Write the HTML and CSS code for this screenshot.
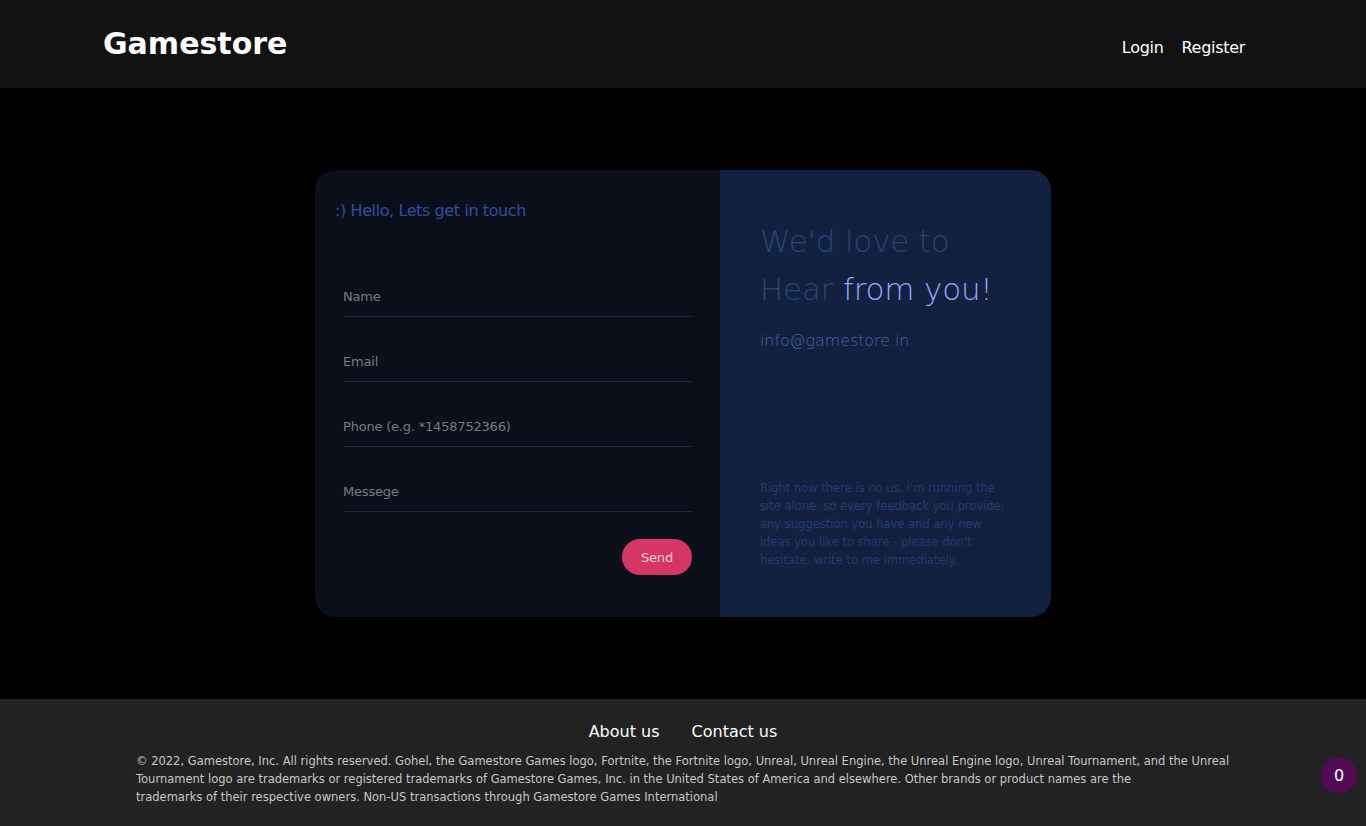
FILE: index.html
```html
<!DOCTYPE html>
<html lang="en">
<head>
<meta charset="utf-8">
<title>Gamestore - Contact</title>
<link rel="stylesheet" href="styles.css">
</head>
<body>
<header class="topbar">
  <a class="logo" href="#">Gamestore</a>
  <nav class="nav">
    <a href="#">Login</a>
    <a href="#">Register</a>
  </nav>
</header>

<main class="main">
  <section class="card">
    <div class="card-form">
      <h2 class="hello">:) Hello, Lets get in touch</h2>
      <form class="form">
        <input class="field" type="text" placeholder="Name">
        <input class="field" type="email" placeholder="Email">
        <input class="field" type="text" placeholder="Phone (e.g. *1458752366)">
        <input class="field" type="text" placeholder="Messege">
        <div class="actions"><button class="send" type="button">Send</button></div>
      </form>
    </div>
    <div class="card-info">
      <h1 class="love">We'd love to<br>Hear <span class="hl">from you!</span></h1>
      <p class="mail">info@gamestore.in</p>
      <p class="note">Right now there is no us, i'm running the site alone. so every feedback you provide, any suggestion you have and any new ideas you like to share - please don't hesitate, write to me immediately.</p>
    </div>
  </section>
</main>

<footer class="footer">
  <div class="flinks">
    <a href="#">About us</a>
    <a href="#">Contact us</a>
  </div>
  <p class="legal">© 2022, Gamestore, Inc. All rights reserved. Gohel, the Gamestore Games logo, Fortnite, the Fortnite logo, Unreal, Unreal Engine, the Unreal Engine logo, Unreal Tournament, and the Unreal Tournament logo are trademarks or registered trademarks of Gamestore Games, Inc. in the United States of America and elsewhere. Other brands or product names are the<br>trademarks of their respective owners. Non-US transactions through Gamestore Games International</p>
  <div class="badge">0</div>
</footer>
</body>
</html>
```

FILE: styles.css
```css
* { box-sizing: border-box; }
html, body { margin: 0; padding: 0; }
body {
  background: #000;
  font-family: "DejaVu Sans", "Open Sans", sans-serif;
  color: #fff;
  height: 826px;
  display: flex;
  flex-direction: column;
}
a { color: inherit; text-decoration: none; }

.topbar {
  height: 88px;
  background: #121212;
  display: flex;
  align-items: center;
  justify-content: space-between;
  padding: 6px 121px 0 103px;
  flex-shrink: 0;
}
.logo {
  font-size: 30px;
  font-weight: 700;
  letter-spacing: 0;
  color: #fff;
  margin-top: -8px;
}
.nav { display: flex; gap: 18px; }
.nav a { font-size: 16px; color: #fff; letter-spacing: -0.3px; }

.main {
  flex: 1;
  display: flex;
  justify-content: center;
  align-items: flex-start;
  padding-top: 82px;
}
.card {
  width: 736px;
  height: 447px;
  border-radius: 20px;
  overflow: hidden;
  display: flex;
}
.card-form {
  width: 405px;
  background: #0b0f1a;
  padding: 29px 28px 0 20px;
}
.hello {
  margin: 0;
  font-size: 16px;
  font-weight: 400;
  color: #2f4ea3;
  letter-spacing: -0.4px;
  line-height: 24px;
}
.form {
  margin-top: 53px;
  padding-left: 8px;
  display: flex;
  flex-direction: column;
  gap: 24px;
}
.field {
  background: transparent;
  border: 0;
  border-bottom: 1px solid #1b2744;
  height: 41px;
  padding: 0;
  font-family: inherit;
  font-size: 13px;
  color: #ccc;
  outline: none;
}
.field::placeholder { color: #7a7b80; letter-spacing: -0.2px; }
.actions { display: flex; justify-content: flex-end; margin-top: 3px; }
.send {
  width: 70px;
  height: 36px;
  border: 0;
  border-radius: 18px;
  background: #d63665;
  color: #ffccd6;
  font-family: inherit;
  font-size: 13px;
  letter-spacing: -0.2px;
}

.card-info {
  flex: 1;
  background: #12213f;
  padding: 47px 40px 0 40px;
}
.love {
  margin: 0;
  font-size: 31px;
  font-weight: 300;
  line-height: 48px;
  color: #274579;
  letter-spacing: -0.2px;
}
.hl { color: #9aa4ff; }
.mail {
  margin: 18px 0 0;
  font-size: 16px;
  font-weight: 300;
  color: #4664a6;
  letter-spacing: -0.1px;
}
.note {
  margin: 129px 0 0;
  font-size: 11.5px;
  line-height: 18px;
  color: #213c72;
  letter-spacing: 0;
}

.footer {
  height: 127px;
  background: #222;
  flex-shrink: 0;
  position: relative;
  padding-top: 23px;
}
.flinks { display: flex; justify-content: center; gap: 32px; }
.flinks a { font-size: 16px; color: #fff; letter-spacing: 0; }
.legal {
  width: 1094px;
  margin: 11px auto 0;
  font-size: 11.5px;
  line-height: 18px;
  color: #c8c8c8;
  letter-spacing: 0;
}
.badge {
  position: absolute;
  right: 9px;
  top: 58px;
  width: 36px;
  height: 36px;
  border-radius: 50%;
  background: #530a55;
  color: #fff;
  font-size: 16px;
  display: flex;
  align-items: center;
  justify-content: center;
}
```
